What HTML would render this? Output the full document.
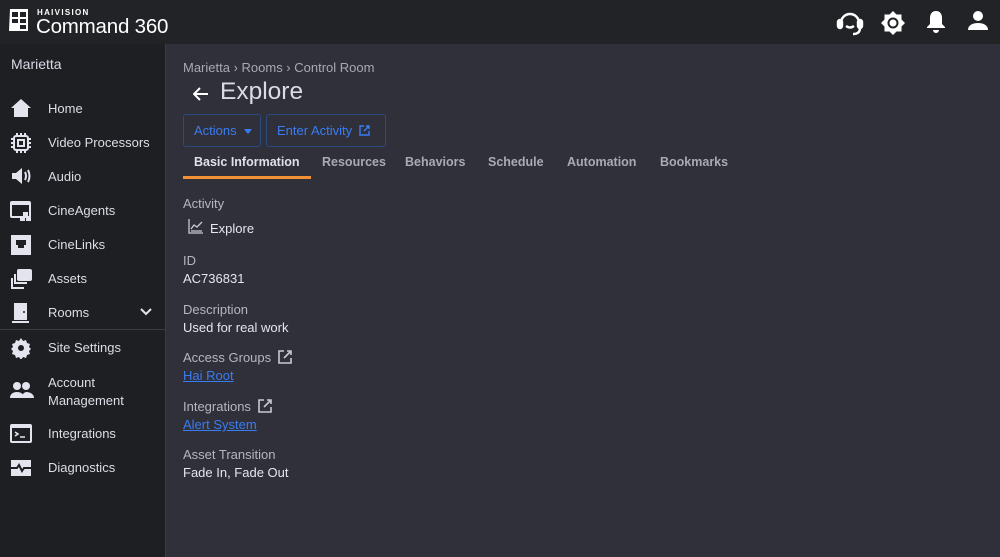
<!DOCTYPE html>
<html><head><meta charset="utf-8"><style>
*{margin:0;padding:0;box-sizing:border-box}
body{width:1000px;height:557px;overflow:hidden;background:#2f3039;font-family:"Liberation Sans",sans-serif;color:#e4e4ea;position:relative}
.top{position:absolute;left:0;top:0;width:1000px;height:44px;background:#222327}
.side{position:absolute;left:0;top:44px;width:166px;height:513px;background:#1e1f22;border-right:1px solid #3a3b44}
.main{position:absolute;left:167px;top:44px;right:0;bottom:0;background:#2f3039}
.logo{position:absolute;left:8px;top:7px}
.logo .h{position:absolute;left:29px;top:1px;font-size:8px;font-weight:bold;letter-spacing:1.3px;color:#fff}
.logo .c{position:absolute;left:28px;top:8px;font-size:20.5px;color:#fff;white-space:nowrap;letter-spacing:-0.2px}
.ti{position:absolute;top:10px}
.side .site{position:absolute;left:11px;top:12px;font-size:14px;color:#d8dae6}
.item{position:absolute;left:0;width:166px;height:30px;font-size:13px;color:#dcdde6}
.item svg{position:absolute;left:10px;top:5px}
.item span{position:absolute;left:48px;top:7px;line-height:18px}
.sep{position:absolute;left:0;top:285px;width:166px;height:1px;background:#3a3b44}
.bc{position:absolute;left:16px;top:16px;font-size:13px;color:#a8a9b5}
.title{position:absolute;left:53px;top:34px;font-size:24.5px;color:#dadbe5}
.btn{position:absolute;top:70px;height:33px;border:1px solid #2c4a7e;border-radius:3px;color:#3a7cf2;font-size:13px;line-height:31px;padding-left:10px}
.tab{position:absolute;top:111px;font-size:12.5px;font-weight:bold;color:#a9aab6}
.lbl{position:absolute;left:16px;font-size:13px;color:#b5b6c2}
.val{position:absolute;left:16px;font-size:13px;color:#e6e6ee}
.lnk{position:absolute;left:16px;font-size:13px;color:#3a7cf2;text-decoration:underline}
</style></head><body>
<div class="top">
 <div class="logo">
  <svg width="22" height="26" viewBox="0 0 22 26"><path d="M2 2h18v22H1z" fill="#fff"/><g fill="#222327"><rect x="4" y="5" width="6" height="5"/><rect x="12" y="5" width="6" height="5"/><rect x="4" y="12" width="6" height="4"/><rect x="12" y="12" width="6" height="4"/><rect x="12" y="18" width="6" height="4"/></g></svg>
  <div class="h">HAIVISION</div><div class="c">Command 360</div>
 </div>
 <svg class="ti" style="left:836px" width="28" height="26" viewBox="0 0 28 26" fill="none" stroke="#fff" stroke-width="2.4"><path d="M5 13a9 9 0 0 1 18 0"/><rect x="2" y="10" width="4" height="8" rx="2" fill="#fff"/><rect x="22" y="10" width="4" height="8" rx="2" fill="#fff"/><path d="M10 16q4 3 8 0M24 18q0 6-7 6"/></svg>
 <svg class="ti" style="left:880px" width="26" height="26" viewBox="0 0 26 26"><path d="M13 1l3.5 3.5H21.5V9.5L25 13l-3.5 3.5v5h-5L13 25l-3.5-3.5h-5v-5L1 13l3.5-3.5v-5h5z" fill="#fff"/><circle cx="13" cy="13" r="5.5" fill="#222327"/><circle cx="13" cy="13" r="3.5" fill="#fff"/></svg>
 <svg class="ti" style="left:926px" width="20" height="24" viewBox="0 0 20 24"><path d="M10 1c4 0 6 3 6 7v6l3 3v1H1v-1l3-3V8c0-4 2-7 6-7z" fill="#fff"/><path d="M7 20a3 3 0 0 0 6 0z" fill="#fff"/></svg>
 <svg class="ti" style="left:968px" width="20" height="22" viewBox="0 0 20 22" fill="#fff"><circle cx="10" cy="6" r="5"/><path d="M0 20c0-5 5-7 10-7s10 2 10 7z"/></svg>
</div>
<div class="side">
 <div class="site">Marietta</div>
 <div class="item" style="top:49px"><svg width="22" height="20" viewBox="0 0 22 20" fill="#e4e4ee"><path d="M11 1l10 9h-3v9H4v-9H1z"/></svg><span>Home</span></div>
 <div class="item" style="top:83px"><svg width="22" height="22" viewBox="0 0 22 22" fill="none" stroke="#e4e4ee" stroke-width="2"><rect x="4" y="4" width="14" height="14" rx="2"/><rect x="8" y="8" width="6" height="6"/><path d="M7 1v3M11 1v3M15 1v3M7 18v3M11 18v3M15 18v3M1 7h3M1 11h3M1 15h3M18 7h3M18 11h3M18 15h3"/></svg><span>Video Processors</span></div>
 <div class="item" style="top:117px"><svg width="22" height="20" viewBox="0 0 22 20" fill="#e4e4ee"><path d="M2 7h4l6-5v16l-6-5H2z"/><path d="M15 6q2 4 0 8M18 4q3 6 0 12" stroke="#e4e4ee" stroke-width="2" fill="none"/></svg><span>Audio</span></div>
 <div class="item" style="top:151px"><svg width="22" height="22" viewBox="0 0 22 22"><rect x="1" y="2" width="19" height="15" rx="1" fill="none" stroke="#e4e4ee" stroke-width="2"/><rect x="1" y="2" width="19" height="3" fill="#e4e4ee"/><g fill="#e4e4ee"><rect x="13" y="12" width="5" height="4"/><rect x="10" y="17" width="5" height="4"/><rect x="16" y="17" width="5" height="4"/></g></svg><span>CineAgents</span></div>
 <div class="item" style="top:185px"><svg width="22" height="22" viewBox="0 0 22 22"><rect x="1" y="1" width="20" height="20" fill="#e4e4ee"/><path d="M6 6h10v5h-2v3H8v-3H6z" fill="#1e1f22"/></svg><span>CineLinks</span></div>
 <div class="item" style="top:219px"><svg width="22" height="22" viewBox="0 0 22 22" fill="none" stroke="#e4e4ee" stroke-width="2"><rect x="8" y="2" width="13" height="10" rx="1" fill="#e4e4ee"/><path d="M5 6v9h12M2 10v10h12"/></svg><span>Assets</span></div>
 <div class="item" style="top:253px"><svg width="22" height="22" viewBox="0 0 22 22"><rect x="4" y="1" width="13" height="17" fill="#e4e4ee"/><rect x="2" y="19" width="17" height="2" fill="#e4e4ee"/><circle cx="14" cy="10" r="1" fill="#1e1f22"/></svg><span>Rooms</span><svg style="left:139px;top:10px" width="14" height="10" viewBox="0 0 14 10" fill="none" stroke="#e4e4ee" stroke-width="2"><path d="M2 2l5 5 5-5"/></svg></div>
 <div class="sep"></div>
 <div class="item" style="top:288px"><svg width="22" height="22" viewBox="0 0 22 22"><path d="M11 1l2 3 3-1 1 3 3 1-1 3 2 2-2 2 1 3-3 1-1 3-3-1-2 3-2-3-3 1-1-3-3-1 1-3-2-2 2-2-1-3 3-1 1-3 3 1z" fill="#e4e4ee"/><circle cx="11" cy="11" r="3" fill="#1e1f22"/></svg><span>Site Settings</span></div>
 <div class="item" style="top:330px"><svg width="24" height="22" viewBox="0 0 24 22" fill="#e4e4ee" style="top:5px"><circle cx="7" cy="7" r="4"/><circle cx="16" cy="7" r="4"/><path d="M0 19c0-4 3-6 7-6s7 2 7 6zM12 19c0-3 1-5 4-6 4 0 8 2 8 6z"/></svg><span style="top:0">Account<br>Management</span></div>
 <div class="item" style="top:374px"><svg width="22" height="22" viewBox="0 0 22 22"><rect x="1" y="2" width="20" height="17" rx="1" fill="none" stroke="#e4e4ee" stroke-width="2"/><rect x="1" y="2" width="20" height="3" fill="#e4e4ee"/><path d="M5 9l3 2-3 2M10 14h5" stroke="#e4e4ee" stroke-width="1.6" fill="none"/></svg><span>Integrations</span></div>
 <div class="item" style="top:408px"><svg width="22" height="22" viewBox="0 0 22 22"><rect x="1" y="3" width="20" height="16" fill="#e4e4ee"/><path d="M1 11h6l2-3 3 6 2-3h7" stroke="#1e1f22" stroke-width="2" fill="none"/></svg><span>Diagnostics</span></div>
</div>
<div class="main">
 <div class="bc">Marietta › Rooms › Control Room</div>
 <svg style="position:absolute;left:26px;top:43px" width="16" height="14" viewBox="0 0 16 14" fill="none" stroke="#fff" stroke-width="2"><path d="M15 7H2M7 1L1 7l6 6"/></svg>
 <div class="title">Explore</div>
 <div class="btn" style="left:16px;width:78px">Actions <span style="display:inline-block;border:4px solid transparent;border-top:5px solid #3a7cf2;vertical-align:-3px;margin-left:4px"></span></div>
 <div class="btn" style="left:99px;width:120px">Enter Activity <svg style="vertical-align:-1px;margin-left:3px" width="11" height="11" viewBox="0 0 11 11" fill="none" stroke="#3a7cf2" stroke-width="1.4"><path d="M5 1H1v9h9V6M7 1h3v3M10 1L5 6"/></svg></div>
 <div class="tab" style="left:27px;color:#e0e0ea">Basic Information</div>
 <div style="position:absolute;left:16px;top:132px;width:128px;height:3px;background:#f39234"></div>
 <div class="tab" style="left:155px">Resources</div>
 <div class="tab" style="left:238px">Behaviors</div>
 <div class="tab" style="left:321px">Schedule</div>
 <div class="tab" style="left:400px">Automation</div>
 <div class="tab" style="left:493px">Bookmarks</div>
 <div class="lbl" style="top:152px">Activity</div>
 <svg style="position:absolute;left:21px;top:174px" width="16" height="16" viewBox="0 0 16 16" fill="none" stroke="#c8c9d2" stroke-width="1.3"><path d="M1 1v14h14M3 11l3-4 3 2 5-5M3 13h11"/></svg>
 <div class="val" style="left:43px;top:177px">Explore</div>
 <div class="lbl" style="top:209px">ID</div>
 <div class="val" style="top:227px">AC736831</div>
 <div class="lbl" style="top:258px">Description</div>
 <div class="val" style="top:276px">Used for real work</div>
 <div class="lbl" style="top:306px">Access Groups <svg style="vertical-align:-2px;margin-left:3px" width="14" height="14" viewBox="0 0 14 14" fill="none" stroke="#c8c9d2" stroke-width="1.6"><path d="M6 1H1v12h12V8M9 1h4v4M13 1L6 8"/></svg></div>
 <div class="lnk" style="top:324px">Hai Root</div>
 <div class="lbl" style="top:355px">Integrations <svg style="vertical-align:-2px;margin-left:3px" width="14" height="14" viewBox="0 0 14 14" fill="none" stroke="#c8c9d2" stroke-width="1.6"><path d="M6 1H1v12h12V8M9 1h4v4M13 1L6 8"/></svg></div>
 <div class="lnk" style="top:373px">Alert System</div>
 <div class="lbl" style="top:403px">Asset Transition</div>
 <div class="val" style="top:421px">Fade In, Fade Out</div>
</div>
</body></html>
